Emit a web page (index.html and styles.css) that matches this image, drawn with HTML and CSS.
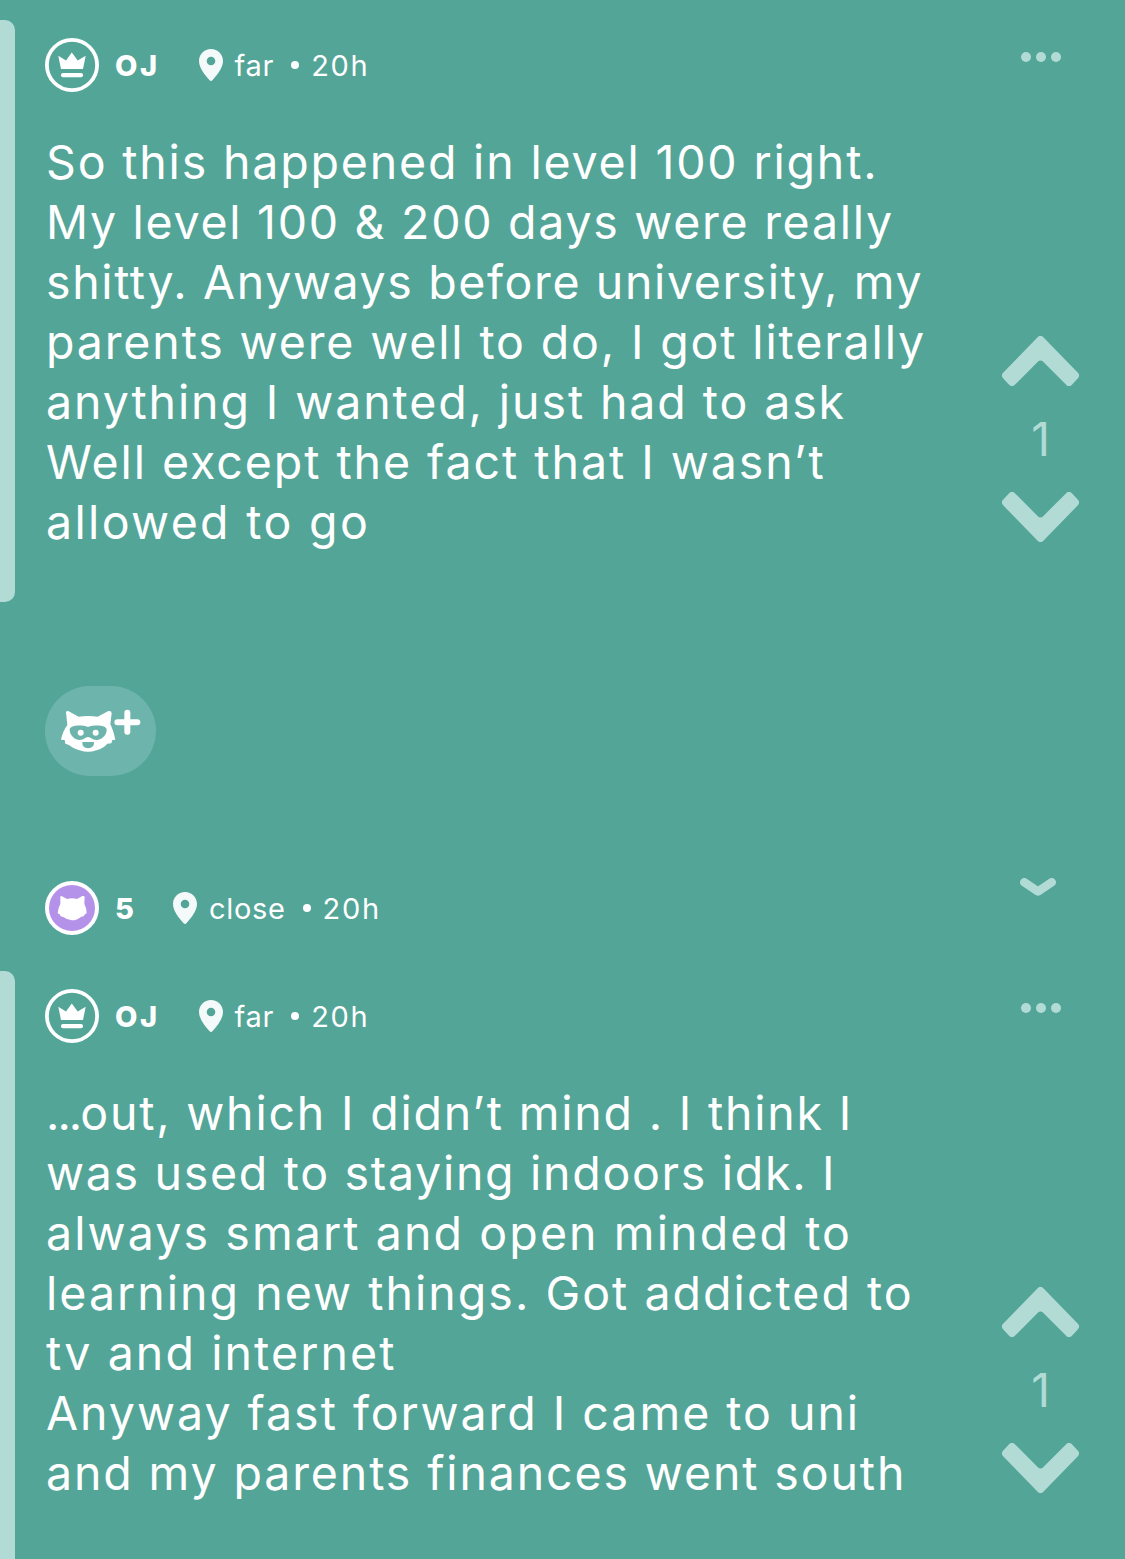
FILE: index.html
```
<!DOCTYPE html>
<html lang="en">
<head>
    <title>Thread</title>
    <meta charset="utf-8" />
    <link rel="stylesheet" href="styles.css">
</head>
<body>
    <svg class="sprite" width="0" height="0">
        <symbol id="crown" viewBox="0 0 54 54">
            <circle cx="27" cy="27" r="25.1" fill="none" stroke="currentColor" stroke-width="3.8" />
            <path d="M13.3 17.7 L21 22.5 L26.8 14.5 L32.7 22.5 L40.7 17.7 L38 31 H16 Z" fill="currentColor" />
            <rect x="16" y="35" width="22" height="4.2" rx="2" fill="currentColor" />
        </symbol>
        <symbol id="pin" viewBox="0 0 24 32">
            <path fill="currentColor" fill-rule="evenodd" d="M12 0 C5.2 0 0 5.2 0 11.8 C0 19 5.5 25.5 10.6 31.3 Q12 32.7 13.4 31.3 C18.5 25.5 24 19 24 11.8 C24 5.2 18.8 0 12 0 Z M12 7.7 A4.3 4.3 0 1 1 12 16.3 A4.3 4.3 0 1 1 12 7.7 Z" />
        </symbol>
        <symbol id="dots" viewBox="0 0 40 10">
            <circle cx="5" cy="5" r="5" fill="currentColor" />
            <circle cx="20" cy="5" r="5" fill="currentColor" />
            <circle cx="35" cy="5" r="5" fill="currentColor" />
        </symbol>
        <symbol id="chevron" viewBox="0 0 77 50">
            <path d="M38.5 4 L73 39.5 L67 46 L43 22 Q38.5 19 34 22 L10 46 L4 39.5 Z" fill="currentColor" stroke="currentColor" stroke-width="8" stroke-linejoin="round" />
        </symbol>
    </svg>

    <div class="post">
        <div class="bar"></div>
        <div class="content">
            <div class="meta">
                <svg class="avatar"><use href="#crown" /></svg>
                <b class="name">OJ</b>
                <svg class="pin"><use href="#pin" /></svg>
                <span class="place">far</span>
                <i class="dot"></i>
                <span class="time">20h</span>
            </div>
            <p class="text">
                <span class="l1">So this happened in level 100 right.</span>
                <span class="l2">My level 100 &amp; 200 days were really</span>
                <span class="l3">shitty. Anyways before university, my</span>
                <span class="l4">parents were well to do, I got literally</span>
                <span class="l5">anything I wanted, just had to ask</span>
                <span class="l6">Well except the fact that I wasn’t</span>
                <span class="l7">allowed to go</span>
            </p>
        </div>
        <div class="side">
            <svg class="more"><use href="#dots" /></svg>
            <div class="votes">
                <svg class="arrow"><use href="#chevron" /></svg>
                <span class="count">1</span>
                <svg class="arrow down"><use href="#chevron" /></svg>
            </div>
        </div>
    </div>

    <div class="react">
        <svg viewBox="45 48 333 270">
            <path fill="#fff" d="M108 127 Q109 121 116 124 L146 140 Q174 136 203 140 L235 123 Q245 121 245 130 L241 163 Q249 178 256 209 L247 210 L244 220 L232 221 Q220 235 199 241 Q174 250 149 241 Q128 235 117 225 L106 221 L104 210 L93 209 Q98 184 112 165 Z" />
            <path fill="#6db5ac" d="M119 178 C120 166 153 163 174 171 C196 163 229 166 230 178 C231 194 217 210 199 210 C186 210 183 201 174 201 C165 201 163 210 149 210 C133 210 118 194 119 178 Z M157 216 H192 Q193 234 174 235 Q156 234 157 216 Z" />
            <circle cx="152" cy="188" r="9" fill="#fff" />
            <circle cx="197" cy="188" r="9" fill="#fff" />
            <path d="M262 157 H322 M292 128 V185" stroke="#fff" stroke-width="18" stroke-linecap="round" />
        </svg>
    </div>

    <div class="reply">
        <div class="meta">
            <svg class="avatar" viewBox="0 0 162 162">
                <circle cx="81" cy="81" r="75" fill="#b492e9" stroke="#fff" stroke-width="12" />
                <path fill="#fff" d="M46 47 Q47 44 51 46 L66 54 Q81 50 96 54 L112 45 Q119 44 119 49 L118 68 Q125 82 125 97 L120 100 L116 106 L109 107 Q96 118 81 118 Q66 117 55 108 L47 106 L44 100 L38 97 Q39 81 46 69 Z" />
            </svg>
            <b class="name">5</b>
            <svg class="pin"><use href="#pin" /></svg>
            <span class="place">close</span>
            <i class="dot"></i>
            <span class="time">20h</span>
        </div>
        <svg class="expand" viewBox="0 0 36 18">
            <path d="M4.3 4.3 L18 13.5 L31.7 4.3" fill="none" stroke="currentColor" stroke-width="8.6" stroke-linecap="round" stroke-linejoin="round" />
        </svg>
    </div>

    <div class="post last">
        <div class="bar"></div>
        <div class="content">
            <div class="meta">
                <svg class="avatar"><use href="#crown" /></svg>
                <b class="name">OJ</b>
                <svg class="pin"><use href="#pin" /></svg>
                <span class="place">far</span>
                <i class="dot"></i>
                <span class="time">20h</span>
            </div>
            <p class="text">
                <span class="m1"><span class="dots">...</span>out, which I didn’t mind . I think I</span>
                <span class="m2">was used to staying indoors idk. I</span>
                <span class="m3">always smart and open minded to</span>
                <span class="m4">learning new things. Got addicted to</span>
                <span class="m5">tv and internet</span>
                <span class="m6">Anyway fast forward I came to uni</span>
                <span class="m7">and my parents finances went south</span>
            </p>
        </div>
        <div class="side">
            <svg class="more"><use href="#dots" /></svg>
            <div class="votes">
                <svg class="arrow"><use href="#chevron" /></svg>
                <span class="count">1</span>
                <svg class="arrow down"><use href="#chevron" /></svg>
            </div>
        </div>
    </div>
</body>
</html>
```
FILE: styles.css
```
html, body {
    height: 100%;
    margin: 0;
    overflow: hidden;
    font-family: Inter, "Open Sans", sans-serif;
    font-weight: 400;
    background-color: #53a598;
    color: #fff;
}

body {
    box-sizing: border-box;
    padding-top: 20px;
}

svg {
    display: block;
    flex: none;
}

.sprite {
    display: none;
}

.post {
    display: flex;
    height: 582px;
}

.bar {
    width: 15px;
    border-radius: 0 10px 10px 0;
    background-color: #b2dbd6;
}

.content {
    width: 940px;
    padding: 18px 0 0 30px;
}

.meta {
    display: flex;
    align-items: center;
    height: 54px;
}

.avatar {
    width: 54px;
    height: 54px;
}

.name {
    margin-left: 16px;
    font-size: 29px;
    font-weight: 800;
    letter-spacing: 2.5px;
}

.pin {
    width: 24px;
    height: 32px;
    margin-left: 39px;
    color: #f3faf9;
}

.reply .name {
    letter-spacing: 0;
}

.place {
    margin-left: 12px;
    font-size: 29px;
    letter-spacing: 0.7px;
}

.dot {
    width: 8px;
    height: 8px;
    margin: 0 12px 0 17px;
    border-radius: 50%;
    background-color: #fff;
}

.time {
    font-size: 29px;
    letter-spacing: 1.7px;
}

.text {
    margin: 40px 0 0 1px;
    font-size: 46.5px;
    line-height: 60px;
    white-space: nowrap;
}

.text > span {
    display: block;
}

/* tracking is tuned line by line */
.l1 { letter-spacing: 1.82px; }
.l2 { letter-spacing: 1.72px; }
.l3 { letter-spacing: 1.62px; }
.l4 { letter-spacing: 1.86px; }
.l5 { letter-spacing: 1.9px; }
.l6 { letter-spacing: 1.95px; }
.l7 { letter-spacing: 2.35px; }
.m1 { letter-spacing: 1.8px; }
.m2 { letter-spacing: 1.7px; }
.m3 { letter-spacing: 2.1px; }
.m4 { letter-spacing: 2.03px; }
.m5 { letter-spacing: 2.1px; }
.m6 { letter-spacing: 1.98px; }
.m7 { letter-spacing: 1.87px; }

.dots {
    letter-spacing: -2px;
}

.side {
    display: flex;
    flex-direction: column;
    align-items: center;
    width: 111px;
    color: #b2dbd6;
}

.more {
    width: 40px;
    height: 10px;
    margin-top: 32px;
}

.votes {
    display: flex;
    flex-direction: column;
    align-items: center;
    margin-top: 274px;
}

.arrow {
    width: 77px;
    height: 50px;
}

.down {
    transform: rotate(180deg);
}

.count {
    font-size: 46px;
    line-height: 106px;
}

.react {
    width: 111px;
    height: 90px;
    margin: 84px 0 0 45px;
    border-radius: 45px;
    background-color: #6db5ac;
}

.reply {
    display: flex;
    justify-content: space-between;
    margin: 105px 69px 36px 45px;
}

.expand {
    width: 36px;
    height: 18px;
    margin-top: -3px;
    color: #b2dbd6;
}

.last {
    height: 588px;
}

.last .bar {
    border-radius: 0 10px 0 0;
}
```
